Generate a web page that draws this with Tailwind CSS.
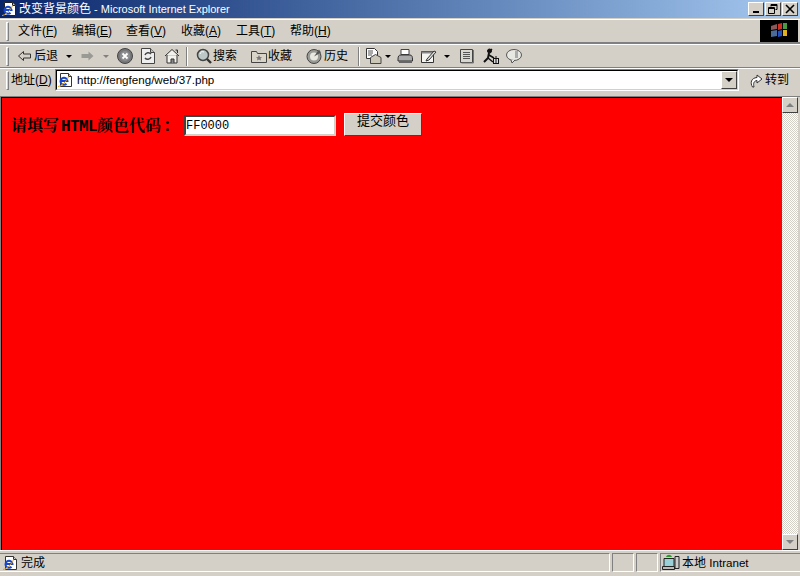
<!DOCTYPE html>
<html lang="en">
<head>
  <meta charset="UTF-8">
  <title>改变背景颜色 - Microsoft Internet Explorer</title>
  <script src="https://cdn.jsdelivr.net/npm/@tailwindcss/browser@4"></script>
</head>
<body class="bg-[#d4d0c8] w-[800px] h-[576px] overflow-hidden flex flex-col font-['Liberation_Sans','Noto_Sans_CJK_SC',sans-serif] text-[12px] leading-none text-black">

  <!-- title bar -->
  <div class="h-[18px] flex items-center bg-gradient-to-r from-[#0a246a] to-[#a6caf0] text-white">
    <svg class="ml-[1px] w-4 h-4" viewBox="0 0 16 16"><path d="M3.500 1.500h8l3 3v10h-11z" fill="#fff" stroke="#222"/><path d="M11.500 1.500v3h3" fill="#ccc" stroke="#222"/><path d="M4 9h6.500a3.500 3.500 0 1 0-1 2.800" fill="none" stroke="#1747c8" stroke-width="2"/><path d="M1 14.500c2.500 0 9-5 10.500-10" stroke="#e0a020" fill="none"/></svg>
    <span class="ml-[2px] text-[11px]"><span class="text-[12px]">改变背景颜色</span> - Microsoft Internet Explorer</span>
    <div class="ml-auto mr-[2px] flex">
      <div class="w-4 h-[14px] bg-[#d4d0c8] border border-t-white border-l-white border-r-[#404040] border-b-[#404040] flex items-end justify-center pb-[2px]"><div class="w-[6px] h-[2px] bg-black"></div></div>
      <div class="w-4 h-[14px] ml-[1px] bg-[#d4d0c8] border border-t-white border-l-white border-r-[#404040] border-b-[#404040] flex items-center justify-center">
        <svg class="w-[10px] h-[10px]" viewBox="0 0 10 10" fill="none" stroke="#000"><path d="M3 2.500V.5h6v5H7.500M3 1.500h6"/><path d="M.5 3.500h6v6h-6zM.5 4.500h6"/></svg>
      </div>
      <div class="w-4 h-[14px] ml-[1px] bg-[#d4d0c8] border border-t-white border-l-white border-r-[#404040] border-b-[#404040] flex items-center justify-center">
        <svg class="w-[10px] h-[10px]" viewBox="0 0 10 10" stroke="#000" stroke-width="1.600"><path d="M1 1l8 8M9 1l-8 8"/></svg>
      </div>
    </div>
  </div>

  <!-- menu bar -->
  <div class="h-[25px] mt-[1px] border-t border-white border-b-2 border-b-[#808080] flex items-center relative">
    <div class="ml-[6px] w-[3px] h-[19px] border border-t-white border-l-white border-r-[#808080] border-b-[#808080]"></div>
    <div class="ml-[9px] w-[54px]">文件(<span class="underline">F</span>)</div>
    <div class="w-[54px]">编辑(<span class="underline">E</span>)</div>
    <div class="w-[55px]">查看(<span class="underline">V</span>)</div>
    <div class="w-[55px]">收藏(<span class="underline">A</span>)</div>
    <div class="w-[54px]">工具(<span class="underline">T</span>)</div>
    <div>帮助(<span class="underline">H</span>)</div>
    <div class="absolute right-[2px] top-0 w-[38px] h-[22px] bg-black flex items-center justify-center">
      <svg class="w-[18px] h-[16px] blur-[0.3px]" viewBox="0 0 18 16"><path d="M1 3l6-2v5l-6 1z" fill="#8a5a5a"/><path d="M1 8l6-1v6l-6 1z" fill="#4a6a9a"/><path d="M8 1l4-1v6l-4 1z" fill="#d03020"/><path d="M13 0h4v6h-4z" fill="#4a9a40"/><path d="M8 8l4-1v6l-4 1z" fill="#2050c0"/><path d="M13 7h4v6h-4z" fill="#e0b020"/></svg>
    </div>
  </div>

  <!-- toolbar -->
  <div class="h-[24px] border-t border-white border-b border-b-[#808080] flex items-center">
    <div class="ml-[6px] w-[3px] h-[19px] border border-t-white border-l-white border-r-[#808080] border-b-[#808080]"></div>
    <svg class="ml-[8px] w-[14px] h-[14px]" viewBox="0 0 14 14"><path d="M6.500 2.500L1.500 7l5 4.500V9h7V5h-7z" fill="#d4d0c8" stroke="#333"/></svg>
    <span class="ml-[3px] w-[32px]">后退</span>
    <div class="w-0 h-0 border-x-[3px] border-x-transparent border-t-[3px] border-t-black"></div>
    <svg class="ml-[9px] w-[14px] h-[14px]" viewBox="0 0 14 14"><path d="M7.500 2.500L12.500 7l-5 4.500V9h-7V5h7z" fill="#9a9a94"/></svg>
    <div class="ml-[8px] w-0 h-0 border-x-[3px] border-x-transparent border-t-[3px] border-t-[#808080]"></div>
    <svg class="ml-[8px] w-4 h-4" viewBox="0 0 16 16"><circle cx="8" cy="8" r="7.500" fill="#77787a" stroke="#444"/><circle cx="8" cy="8" r="5" fill="#8e8f90"/><path d="M5.500 5.500l5 5M10.500 5.500l-5 5" stroke="#fff" stroke-width="1.800"/></svg>
    <svg class="ml-[8px] w-[14px] h-[16px]" viewBox="0 0 14 16"><path d="M.5.5h9l4 4v11H.5z" fill="#eee" stroke="#444"/><path d="M9.500.5v4h4" fill="#bbb" stroke="#444"/><path d="M4 7a3.500 3.500 0 0 1 6-1M10 9a3.500 3.500 0 0 1-6 1" fill="none" stroke="#444" stroke-width="1.500"/></svg>
    <svg class="ml-[9px] w-4 h-4" viewBox="0 0 16 16"><path d="M1 8l7-6.500L15 8M3 7v8h10V7" fill="#f4f2ec" stroke="#333"/><path d="M7 15v-4h3v4" fill="#888" stroke="#333"/><path d="M11.500 2h2v3" fill="#999" stroke="#333"/></svg>
    <div class="ml-[6px] w-[2px] h-[19px] border-l border-l-[#808080] border-r border-r-white"></div>
    <svg class="ml-[8px] w-4 h-4" viewBox="0 0 16 16"><circle cx="7" cy="7" r="5.500" fill="#bcc8c8" stroke="#444" stroke-width="1.500"/><path d="M4 6a3 3 0 0 1 4-2" stroke="#fff" fill="none"/><path d="M11 11l4 4" stroke="#333" stroke-width="2.400"/></svg>
    <span class="ml-[1px] w-[38px]">搜索</span>
    <svg class="w-4 h-[14px]" viewBox="0 0 16 14"><path d="M.5 2.500h5l1 2h9v9H.5z" fill="#d8d4c8" stroke="#444"/><path d="M8 6l1 2 2 .3-1.500 1.300.5 2-2-1-2 1 .5-2L5 8.300l2-.3z" fill="#777"/></svg>
    <span class="ml-[1px] w-[38px]">收藏</span>
    <svg class="w-4 h-4" viewBox="0 0 16 16"><circle cx="8" cy="8.500" r="7" fill="#9a9a96" stroke="#444"/><circle cx="8" cy="8.500" r="4" fill="#e8e8e0"/><path d="M8 8.500l5-7 2 3z" fill="#555"/></svg>
    <span class="ml-[2px] w-[34px]">历史</span>
    <div class="w-[2px] h-[19px] border-l border-l-[#808080] border-r border-r-white"></div>
    <svg class="ml-[6px] w-4 h-4" viewBox="0 0 16 16"><path d="M.5.5h8l3 3v7H.5z" fill="#fff" stroke="#333"/><path d="M2 3h5M2 5h5M2 7h4" stroke="#555"/><path d="M4.500 15.500v-6l5-3 5.500 3v6z" fill="#ccc8b8" stroke="#444"/></svg>
    <div class="ml-[3px] w-0 h-0 border-x-[3px] border-x-transparent border-t-[3px] border-t-black"></div>
    <svg class="ml-[6px] w-4 h-4" viewBox="0 0 16 16"><path d="M4 1.500h8v5H4z" fill="#fff" stroke="#444"/><path d="M1 11c0-3 1-4 3-4h9c2 0 2.500 2 2.500 4v2H1z" fill="#aaa" stroke="#333"/><path d="M2 13h13v2H2z" fill="#666"/></svg>
    <svg class="ml-[8px] w-4 h-4" viewBox="0 0 16 16"><path d="M.5 3.500h12v11H.5z" fill="#f4f4f0" stroke="#333"/><path d="M.5 3.500h12v2H.5z" fill="#888"/><path d="M6 11l7-8 2 1-7 8-3 1z" fill="#ddd" stroke="#333"/></svg>
    <div class="ml-[7px] w-0 h-0 border-x-[3px] border-x-transparent border-t-[3px] border-t-black"></div>
    <svg class="ml-[10px] w-[14px] h-4" viewBox="0 0 14 16"><path d="M.5 1.500h12v13H.5z" fill="#d8d8d0" stroke="#444"/><path d="M3 4.500h7M3 6.500h7M3 8.500h7M3 10.500h7" stroke="#555"/><path d="M13.500 2v13H1.500" stroke="#777" fill="none"/></svg>
    <svg class="ml-[9px] w-4 h-4" viewBox="0 0 16 16" fill="none" stroke="#111"><circle cx="6.500" cy="3" r="2" fill="#111"/><path d="M6 5l-1 5-4 4" stroke-width="2"/><path d="M6 7l5 3M5 10l5 4M9 1L7 3" stroke-width="1.500"/><rect x="10.500" y="10.500" width="5" height="5" fill="#ddd"/><path d="M13 8v7"/></svg>
    <svg class="ml-[7px] w-4 h-4" viewBox="0 0 16 16"><ellipse cx="8" cy="7" rx="7.500" ry="5.500" fill="#e8e8e2" stroke="#555"/><path d="M9 3h3v7H9z" fill="#aaa"/><path d="M5 12l1 3 3-3" fill="#e8e8e2" stroke="#555"/></svg>
  </div>

  <!-- address bar -->
  <div class="h-[25px] border-t border-white pb-[2px] flex items-center">
    <div class="ml-[6px] w-[3px] h-[19px] border border-t-white border-l-white border-r-[#808080] border-b-[#808080]"></div>
    <span class="ml-[2px] w-[44px]">地址(<span class="underline">D</span>)</span>
    <div class="w-[684px] h-[22px] border border-t-[#808080] border-l-[#808080] border-b-white border-r-white">
      <div class="h-full border border-t-black border-l-black border-b-[#d4d0c8] border-r-[#d4d0c8] bg-white flex items-center">
        <svg class="w-4 h-4" viewBox="0 0 16 16"><path d="M3.500 1.500h8l3 3v10h-11z" fill="#fff" stroke="#333"/><path d="M11.500 1.500v3h3" fill="#ccc" stroke="#333"/><path d="M4 9h6.500a3.500 3.500 0 1 0-1 2.800" fill="none" stroke="#1747c8" stroke-width="2"/><path d="M1 14.500c2.500 0 9-5 10.500-10" stroke="#e0a020" fill="none"/></svg>
        <span class="ml-[4px] text-[11.600px]">http://fengfeng/web/37.php</span>
        <div class="ml-auto w-4 h-[18px] bg-[#d4d0c8] border border-t-white border-l-white border-r-[#404040] border-b-[#404040] flex items-center justify-center">
          <div class="w-0 h-0 border-x-[4px] border-x-transparent border-t-[4px] border-t-black"></div>
        </div>
      </div>
    </div>
    <svg class="ml-[10px] w-[15px] h-4" viewBox="0 0 15 16" fill="none" stroke="#333"><path d="M3.500 15C1 11 2 6 8 5.500V3l5 4-5 4V8.500C5 9 4 11 5 15z" fill="#fff"/></svg>
    <span class="ml-[1px]">转到</span>
  </div>

  <!-- page area -->
  <div class="h-[454px] mt-[3px] flex border-t border-t-[#808080] border-l border-l-[#808080]">
    <div class="flex-1 border-t border-t-black border-l border-l-black bg-[#ff0000] flex items-start">
      <div class="pl-[9px] pt-[15px] flex items-start">
        <span class="text-[16px] font-bold mt-[5px] w-[165px] whitespace-nowrap font-['Liberation_Serif','Noto_Serif_CJK_SC','Noto_Sans_CJK_SC',serif]">请填写<span class="ml-[2px] font-['Liberation_Mono',monospace] tracking-[-0.6px]">HTML</span>颜色代码<span class="ml-[2px]">：</span></span>
        <input value="FF0000" class="ml-[8px] w-[152px] h-[21px] mt-[2px] bg-white border-2 border-t-[#404040] border-l-[#404040] border-b-[#d4d0c8] border-r-[#d4d0c8] px-0 text-[12px] font-['Liberation_Mono',monospace]">
        <div class="ml-[8px] w-[78px] h-[23px] pb-[10px] bg-[#d4d0c8] border border-t-white border-l-white border-r-[#404040] border-b-[#404040] flex items-center justify-center text-[13px] font-['Noto_Sans_CJK_SC',sans-serif]">提交颜色</div>
      </div>
    </div>
    <!-- scrollbar -->
    <div class="w-[18px] flex flex-col pr-[2px] bg-[#d4d0c8]">
      <div class="w-4 h-4 bg-[#d4d0c8] border border-t-white border-l-white border-r-[#404040] border-b-[#404040] flex items-center justify-center">
        <div class="w-0 h-0 border-x-[4px] border-x-transparent border-b-[4px] border-b-[#808080]"></div>
      </div>
      <div class="flex-1 bg-[repeating-conic-gradient(#d4d0c8_0_25%,#ffffff_0_50%)] bg-[length:2px_2px]"></div>
      <div class="w-4 h-4 bg-[#d4d0c8] border border-t-white border-l-white border-r-[#404040] border-b-[#404040] flex items-center justify-center">
        <div class="w-0 h-0 border-x-[4px] border-x-transparent border-t-[4px] border-t-[#808080]"></div>
      </div>
    </div>
  </div>

  <!-- status bar -->
  <div class="flex-1 border-t border-white pt-[2px] pb-[4px] flex items-stretch">
    <div class="w-[610px] border-t border-t-[#808080] border-b border-white border-r border-r-white flex items-center">
      <svg class="ml-[2px] w-4 h-4" viewBox="0 0 16 16"><path d="M3.500 1.500h8l3 3v10h-11z" fill="#fff" stroke="#333"/><path d="M11.500 1.500v3h3" fill="#ccc" stroke="#333"/><path d="M4 9h6.500a3.500 3.500 0 1 0-1 2.800" fill="none" stroke="#1747c8" stroke-width="2"/><path d="M1 14.500c2.500 0 9-5 10.500-10" stroke="#e0a020" fill="none"/></svg>
      <span class="ml-[3px]">完成</span>
    </div>
    <div class="ml-[2px] w-[22px] border border-t-[#808080] border-l-[#808080] border-r-white border-b-white"></div>
    <div class="ml-[2px] w-[22px] border border-t-[#808080] border-l-[#808080] border-r-white border-b-white"></div>
    <div class="ml-[2px] flex-1 border-t border-t-[#808080] border-l border-l-[#808080] border-b border-b-white flex items-center">
      <svg class="ml-[1px] w-[18px] h-[17px]" viewBox="0 0 18 17"><path d="M2 4.500h10v8H2z" fill="#9ad0d8" stroke="#222"/><path d="M.5 12.500h12v3H.5z" fill="#bbb" stroke="#222"/><path d="M13 2.500h4v12h-4z" fill="#ccc" stroke="#222"/><path d="M4 3c1-3 5-3 6 0z" fill="#2a9a2a"/></svg>
      <span class="ml-[2px] text-[11.600px]"><span class="text-[12px]">本地</span> Intranet</span>
    </div>
  </div>
</body>
</html>
